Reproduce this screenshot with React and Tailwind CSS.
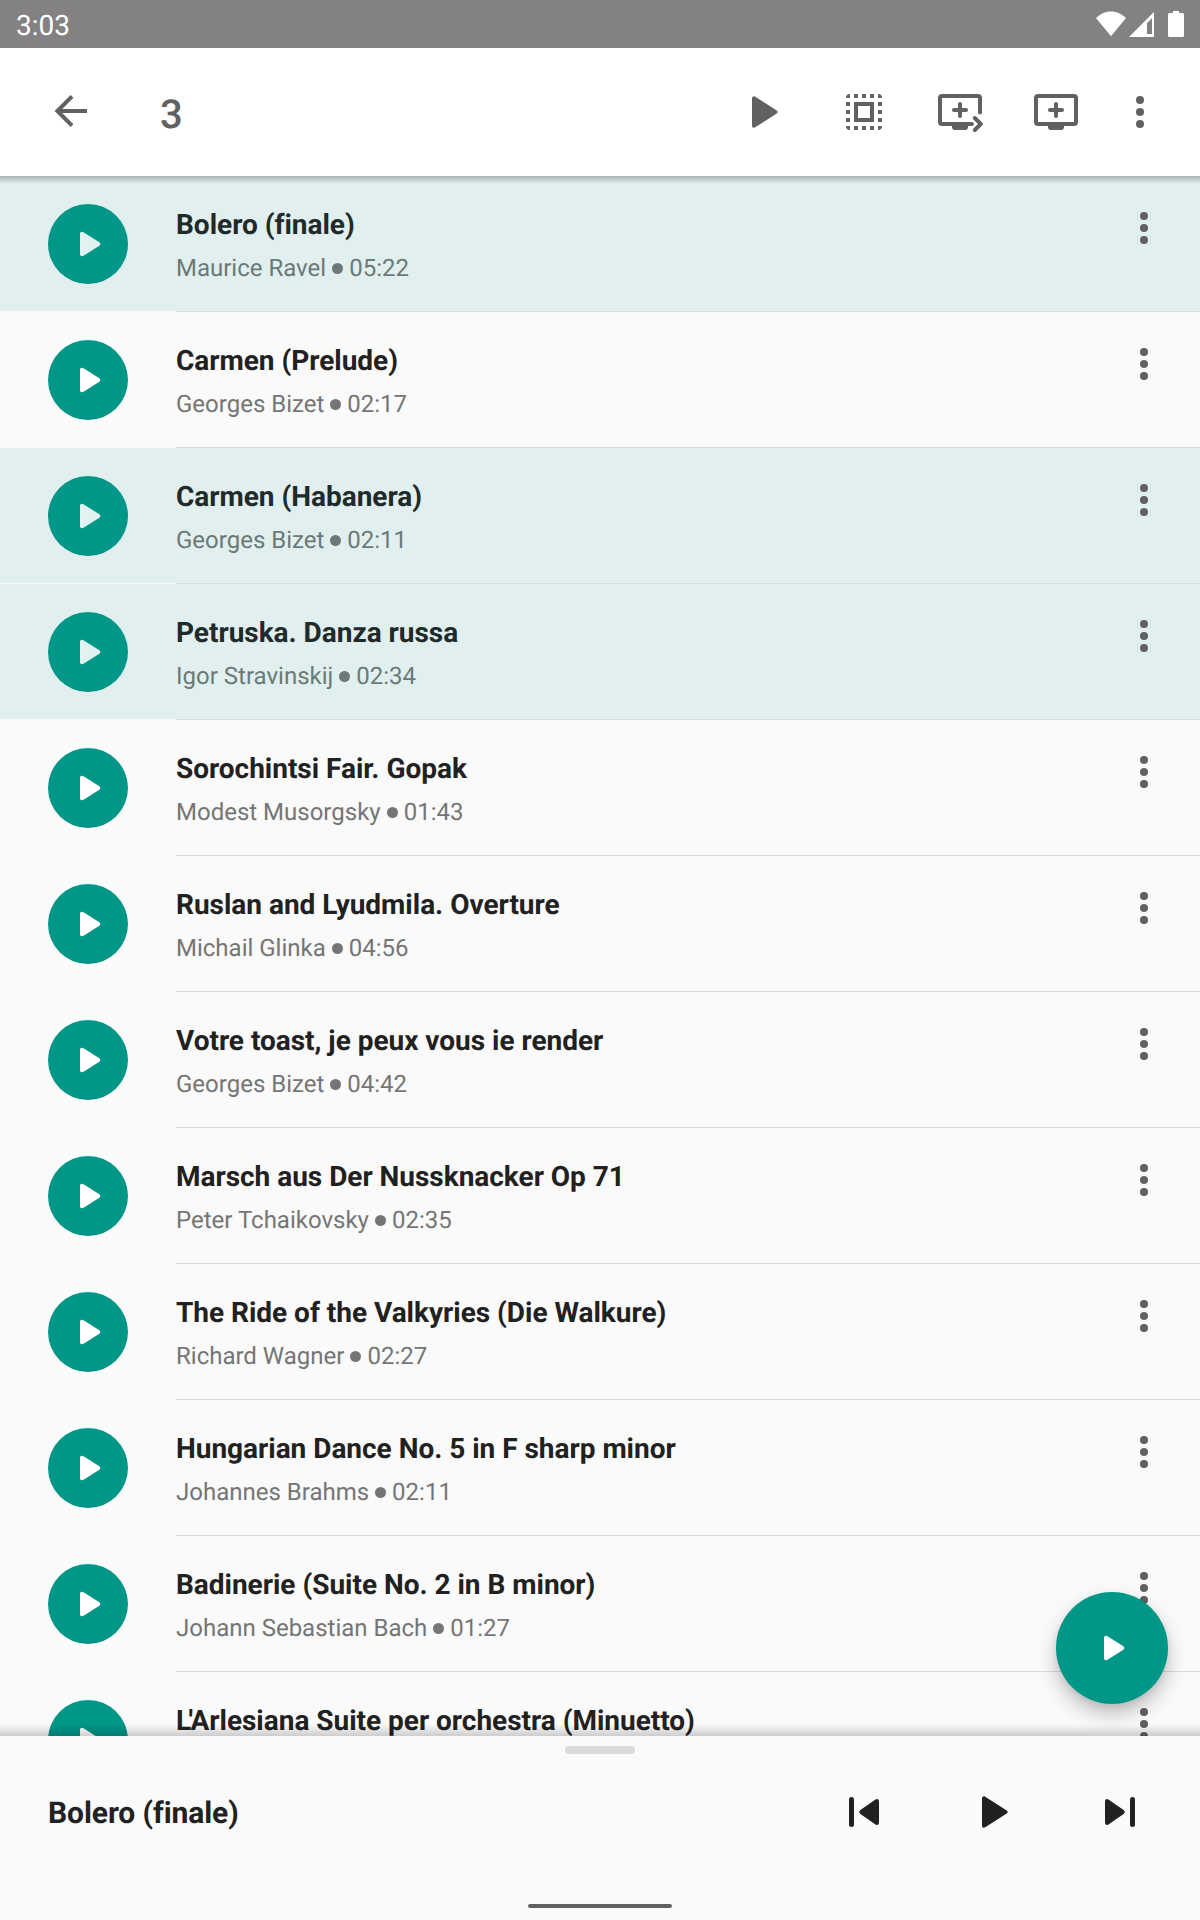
import React, { useState } from 'react';

const initialTracks = [
  { title: 'Bolero (finale)', artist: 'Maurice Ravel', time: '05:22', selected: true },
  { title: 'Carmen (Prelude)', artist: 'Georges Bizet', time: '02:17', selected: false },
  { title: 'Carmen (Habanera)', artist: 'Georges Bizet', time: '02:11', selected: true },
  { title: 'Petruska. Danza russa', artist: 'Igor Stravinskij', time: '02:34', selected: true },
  { title: 'Sorochintsi Fair. Gopak', artist: 'Modest Musorgsky', time: '01:43', selected: false },
  { title: 'Ruslan and Lyudmila. Overture', artist: 'Michail Glinka', time: '04:56', selected: false },
  { title: 'Votre toast, je peux vous ie render', artist: 'Georges Bizet', time: '04:42', selected: false },
  { title: 'Marsch aus Der Nussknacker Op 71', artist: 'Peter Tchaikovsky', time: '02:35', selected: false },
  { title: 'The Ride of the Valkyries (Die Walkure)', artist: 'Richard Wagner', time: '02:27', selected: false },
  { title: 'Hungarian Dance No. 5 in F sharp minor', artist: 'Johannes Brahms', time: '02:11', selected: false },
  { title: 'Badinerie (Suite No. 2 in B minor)', artist: 'Johann Sebastian Bach', time: '01:27', selected: false },
  { prefix: "L'", title: 'Arlesiana Suite per orchestra (Minuetto)', selected: false },
];

const PlayIcon = ({ className }) => (
  <svg viewBox="0 0 24 24" className={className} fill="currentColor">
    <path d="M8 6.82v10.36c0 .79.87 1.27 1.54.84l8.14-5.18c.62-.39.62-1.29 0-1.69L9.54 5.98C8.87 5.55 8 6.03 8 6.82z" />
  </svg>
);

const PlayLargeIcon = () => (
  <svg viewBox="0 0 48 48" className="w-12 h-12" fill="currentColor">
    <path d="M16 10.6v26.8c0 2 1.6 3 3.2 1.9l21.5-13.7c1.3-.8 1.3-2.4 0-3.2L19.2 8.7C17.6 7.6 16 8.6 16 10.6z" />
  </svg>
);

const MoreIcon = () => (
  <svg viewBox="0 0 48 48" className="w-12 h-12" fill="currentColor">
    <circle cx="24" cy="12" r="4" />
    <circle cx="24" cy="24" r="4" />
    <circle cx="24" cy="36" r="4" />
  </svg>
);

const BackIcon = () => (
  <svg viewBox="0 0 48 48" className="w-12 h-12" fill="none" stroke="currentColor" strokeWidth="4">
    <path d="M39 24H10M24 9.400L9.400 24l14.600 14.600" />
  </svg>
);

const SelectAllIcon = () => (
  <svg viewBox="0 0 48 48" className="w-12 h-12" fill="currentColor">
    <path d="M6 10h4V6a4 4 0 0 0-4 4zM38 6v4h4a4 4 0 0 0-4-4zM10 42v-4H6a4 4 0 0 0 4 4zM38 42a4 4 0 0 0 4-4h-4z" />
    <path d="M14 6h4v4h-4zM22 6h4v4h-4zM30 6h4v4h-4zM14 38h4v4h-4zM22 38h4v4h-4zM30 38h4v4h-4z" />
    <path d="M6 14h4v4H6zM6 22h4v4H6zM6 30h4v4H6zM38 14h4v4h-4zM38 22h4v4h-4zM38 30h4v4h-4z" />
    <path d="M14 14h20v20H14zM18 18v12h12V18z" fillRule="evenodd" />
  </svg>
);

const PlayNextIcon = () => (
  <svg viewBox="0 0 48 48" className="w-12 h-12" fill="none" stroke="currentColor" strokeWidth="4">
    <path d="M36 36H6a2 2 0 0 1-2-2V10a2 2 0 0 1 2-2h36a2 2 0 0 1 2 2v14" />
    <path d="M35 36h1M44 23v1.500M24 16v12M18 22h12M38.800 30l6 6-6 6" strokeLinecap="round" strokeLinejoin="round" />
    <path d="M16 37h16v2a3 3 0 0 1-3 3H19a3 3 0 0 1-3-3z" fill="currentColor" stroke="none" />
  </svg>
);

const AddToQueueIcon = () => (
  <svg viewBox="0 0 48 48" className="w-12 h-12" fill="none" stroke="currentColor" strokeWidth="4">
    <rect x="4" y="8" width="40" height="28" rx="2" />
    <path d="M24 16v12M18 22h12" strokeLinecap="round" />
    <path d="M16 37h16v2a3 3 0 0 1-3 3H19a3 3 0 0 1-3-3z" fill="currentColor" stroke="none" />
  </svg>
);

const PreviousIcon = () => (
  <svg viewBox="0 0 30 30" className="w-[30px] h-[30px]" fill="currentColor">
    <rect x="0" y="0" width="5" height="30" rx="2.5" />
    <path d="M30 4.500v21c0 2.200-1.700 3.200-3.500 2L11.400 17c-1.500-1-1.500-3 0-4L26.500 2.500C28.300 1.300 30 2.300 30 4.500z" />
  </svg>
);

const NextIcon = () => (
  <svg viewBox="0 0 30 30" className="w-[30px] h-[30px]" fill="currentColor">
    <rect x="25" y="0" width="5" height="30" rx="2.5" />
    <path d="M0 4.500v21c0 2.200 1.700 3.200 3.500 2L18.600 17c1.500-1 1.500-3 0-4L3.500 2.500C1.700 1.300 0 2.300 0 4.500z" />
  </svg>
);

const StatusBar = () => (
  <div className="h-12 shrink-0 bg-[#848182] text-white flex items-center justify-between pl-4 pr-4">
    <span className="text-[28px] leading-[48px] pt-[3px]">3:03</span>
    <div className="flex items-center">
      <svg viewBox="0 0 30 26" className="w-[30px] h-[26px] mr-[3px]" fill="currentColor">
        <path d="M15 25.300L0 7C4 3 9 .4 15 .4S26 3 30 7z" />
      </svg>
      <svg viewBox="0 0 25 26" className="w-[25px] h-[26px] mr-[14px]" fill="currentColor">
        <path d="M25 1v25H0zM23 7l-5 5.200V23h5z" fillRule="evenodd" />
      </svg>
      <svg viewBox="0 0 16 26" className="w-4 h-[26px]" fill="currentColor">
        <path d="M5 0h6v2h3.500A1.500 1.500 0 0 1 16 3.500v21a1.500 1.500 0 0 1-1.500 1.500h-13A1.500 1.500 0 0 1 0 24.500v-21A1.500 1.500 0 0 1 1.500 2H5z" />
      </svg>
    </div>
  </div>
);

const Toolbar = ({ count }) => (
  <div className="relative z-10 h-32 shrink-0 bg-white text-[#616161] flex items-center pl-12 pr-9">
    <button type="button" aria-label="Back" className="-mt-[2px]">
      <BackIcon />
    </button>
    <span className="ml-16 mt-[5px] text-[40px] leading-none font-medium">{count}</span>
    <div className="ml-auto flex items-center gap-12">
      <button type="button" aria-label="Play" className="mr-2">
        <PlayLargeIcon />
      </button>
      <button type="button" aria-label="Select all">
        <SelectAllIcon />
      </button>
      <button type="button" aria-label="Play next">
        <PlayNextIcon />
      </button>
      <button type="button" aria-label="Add to queue">
        <AddToQueueIcon />
      </button>
      <button type="button" aria-label="More options" className="-ml-3">
        <MoreIcon />
      </button>
    </div>
    <div className="absolute left-0 right-0 top-full h-2 bg-gradient-to-b from-black/25 to-transparent"></div>
  </div>
);

const TrackRow = ({ track, onToggle }) => (
  <div className="h-[136px] shrink-0">
    <div
      onClick={onToggle}
      className={`h-[135px] flex items-start pl-12 pr-8 ${track.selected ? 'bg-[#e1efee] text-[#1e2b2a]' : 'text-[#212121]'}`}
    >
      <div className={`mt-7 w-20 h-20 rounded-full bg-[#009688] flex items-center justify-center ${track.selected ? 'text-[#e1f3f1]' : 'text-white'}`}>
        <PlayIcon className="w-12 h-12" />
      </div>
      <div className="ml-12 mt-8 flex-1">
        <div className="text-[28px] leading-[33px] font-bold tracking-[-0.02px]">
          {track.prefix && <span className="tracking-[-2.6px]">{track.prefix}</span>}
          {track.title}
        </div>
        {track.artist && (
          <div className={`mt-[13px] text-[24px] leading-[28px] flex items-center ${track.selected ? 'text-[#6b7a78]' : 'text-[#757575]'}`}>
            <span>{track.artist}</span>
            <span className="mx-[6px] mt-px w-[11px] h-[11px] rounded-full bg-current"></span>
            <span>{track.time}</span>
          </div>
        )}
      </div>
      <button type="button" aria-label="Track options" className="mt-7 text-[#616161]">
        <MoreIcon />
      </button>
    </div>
    <div className="h-px ml-44 bg-[#d9dcdc]"></div>
  </div>
);

const App = () => {
  const [tracks, setTracks] = useState(initialTracks);

  const toggleTrack = (index) => {
    setTracks(tracks.map((track, i) => (i === index ? { ...track, selected: !track.selected } : track)));
  };

  const count = tracks.filter((track) => track.selected).length;

  return (
    <div className="w-[1200px] h-[1920px] overflow-hidden flex flex-col bg-[#fafafa] font-['Roboto',sans-serif] [text-rendering:geometricPrecision]">
      <StatusBar />
      <Toolbar count={count} />

      <div className="relative flex-1 min-h-0 overflow-hidden flex flex-col">
        {tracks.map((track, index) => (
          <TrackRow key={track.title} track={track} onToggle={() => toggleTrack(index)} />
        ))}

        <button
          type="button"
          aria-label="Play selection"
          className="absolute right-8 bottom-8 w-28 h-28 rounded-full bg-[#009688] text-white flex items-center justify-center shadow-[0_10px_20px_rgba(0,0,0,0.24),0_2px_6px_rgba(0,0,0,0.08)]"
        >
          <PlayIcon className="w-12 h-12" />
        </button>
        <div className="absolute left-0 right-0 bottom-0 h-3 bg-gradient-to-t from-black/18 to-transparent"></div>
      </div>

      {/* Mini player */}
      <div className="h-[184px] shrink-0 bg-[#fafafa] text-[#212121] flex flex-col items-center">
        <div className="mt-[10px] w-[70px] h-2 rounded bg-[#dbdbdb]"></div>
        <div className="self-stretch h-[116px] flex items-center pl-12 pr-[65px]">
          <div className="flex-1 pt-[3px] text-[30px] leading-9 font-bold tracking-[-0.08px]">Bolero (finale)</div>
          <button type="button" aria-label="Previous" className="mr-[87px]">
            <PreviousIcon />
          </button>
          <button type="button" aria-label="Play" className="mr-[91px]">
            <PlayLargeIcon />
          </button>
          <button type="button" aria-label="Next">
            <NextIcon />
          </button>
        </div>
        <div className="mt-auto mb-3 w-36 h-1 rounded-full bg-[#616161]"></div>
      </div>
    </div>
  );
};

export default App;
